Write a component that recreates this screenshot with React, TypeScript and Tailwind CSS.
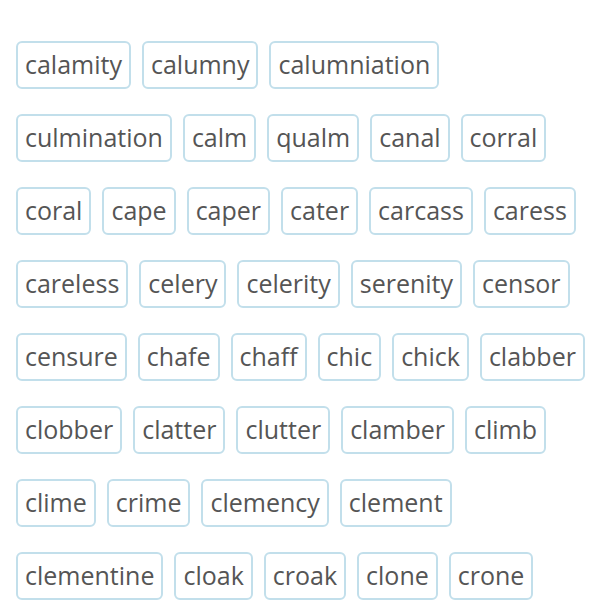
const WORDS = [
  'calamity', 'calumny', 'calumniation',
  'culmination', 'calm', 'qualm', 'canal', 'corral',
  'coral', 'cape', 'caper', 'cater', 'carcass', 'caress',
  'careless', 'celery', 'celerity', 'serenity', 'censor',
  'censure', 'chafe', 'chaff', 'chic', 'chick', 'clabber',
  'clobber', 'clatter', 'clutter', 'clamber', 'climb',
  'clime', 'crime', 'clemency', 'clement',
  'clementine', 'cloak', 'croak', 'clone', 'crone',
];

export default function App() {
  return (
    <div className="h-[600px] w-[600px] overflow-hidden bg-white">
      <div className="flex flex-wrap gap-x-[11px] gap-y-[25px] pl-[16px] pr-[12px] pt-[41px] font-['Open_Sans',sans-serif]">
        {WORDS.map((w) => (
          <span
            key={w}
            className="flex h-[48px] items-center rounded-md border-2 border-[#c2dfeb] px-[7px] text-[25px] text-[#555]"
          >
            {w}
          </span>
        ))}
      </div>
    </div>
  );
}
